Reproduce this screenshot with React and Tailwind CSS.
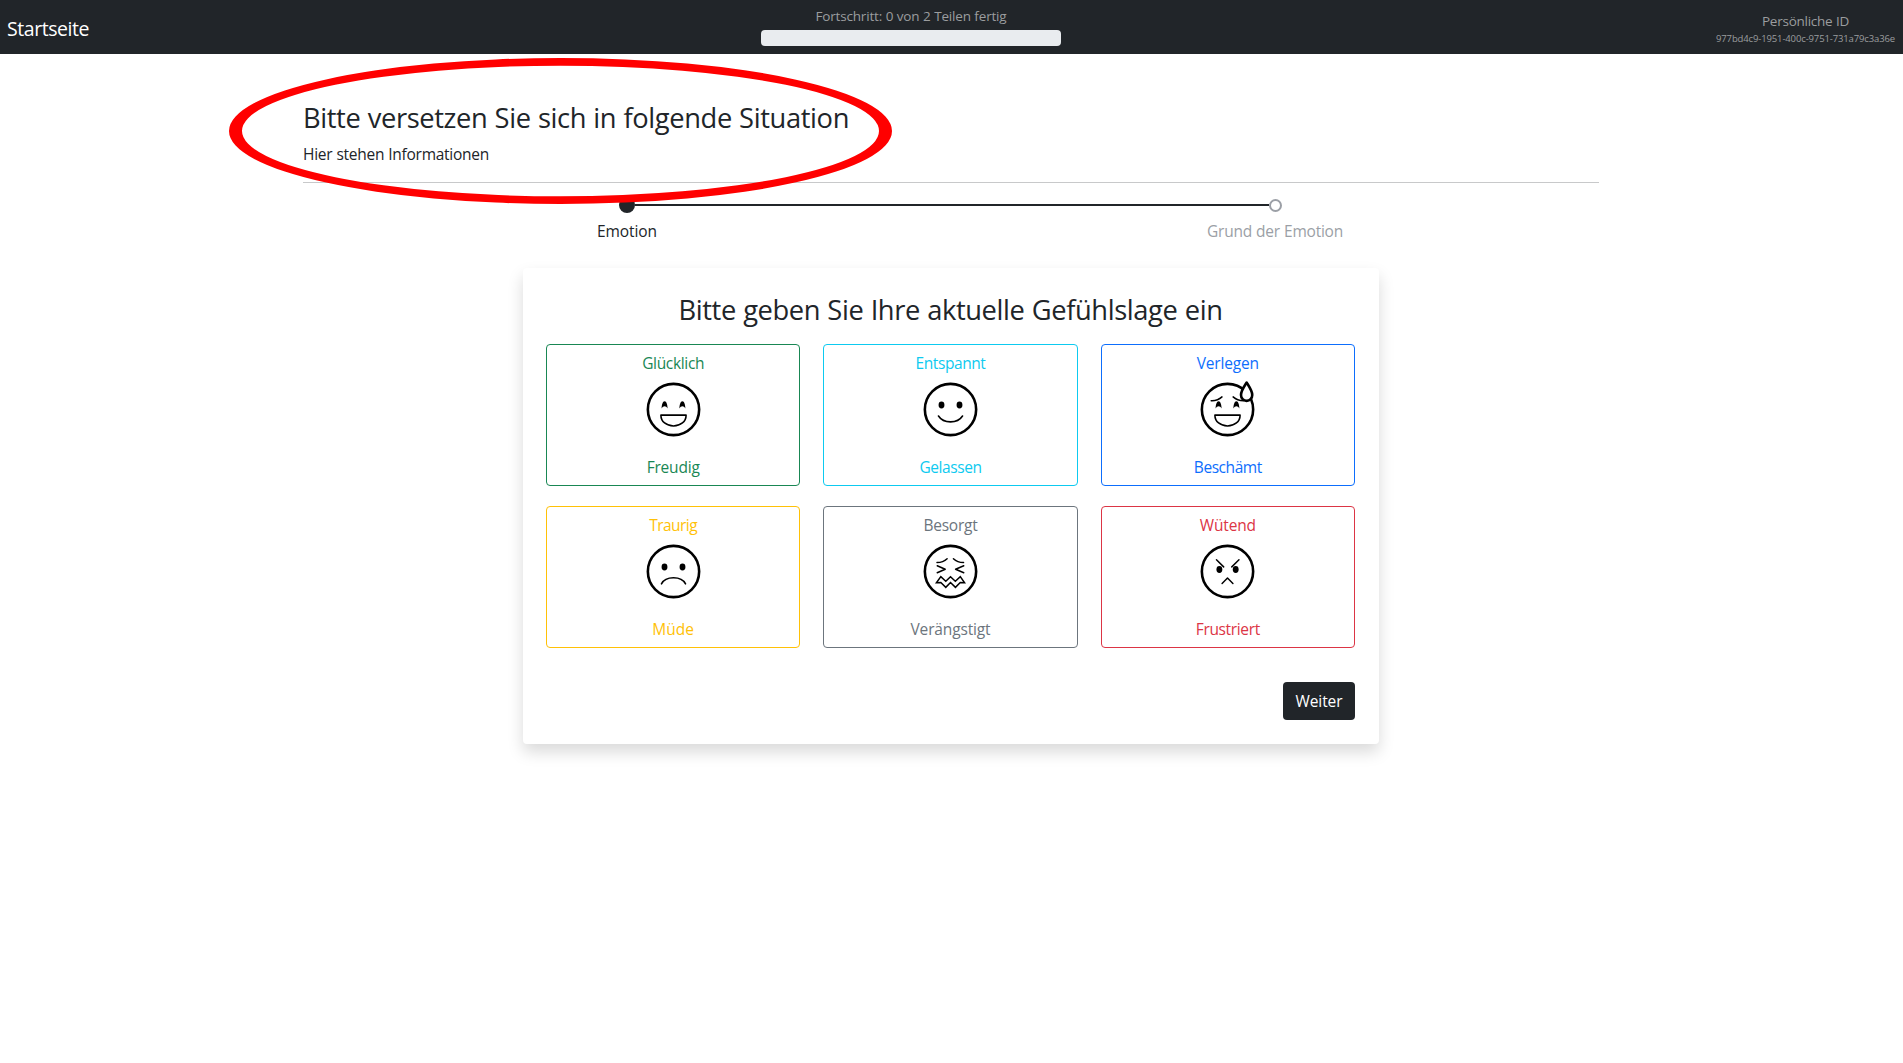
import React from "react";

// A text run tracked to an exact advance width.
function Run({ w, children, className = "" }) {
  const ref = React.useRef(null);
  const [ls, setLs] = React.useState(0);
  React.useLayoutEffect(() => {
    const n = ref.current.textContent.length;
    setLs((w - ref.current.getBoundingClientRect().width) / n);
  }, []);
  return (
    <span ref={ref} className={`inline-block whitespace-nowrap [word-spacing:0.02em] ${className}`} style={{ letterSpacing: `${ls}px` }}>
      {children}
    </span>
  );
}

const BigSmile = () => (
  <path strokeWidth="1.4" d="M24.800 41h22.400c0 5.800-5 9.600-11.200 9.600S24.800 46.800 24.800 41z" />
);

const HappyEyes = () => (
  <g fill="#000" stroke="none">
    <path d="M25.400 35.200c.2-3.600 1-6.600 2.700-6.600s2.500 3 2.700 6.600c-.8-1.600-1.700-2.200-2.700-2.200s-1.900.6-2.700 2.200z" />
    <path d="M41.200 35.200c.2-3.600 1-6.600 2.700-6.600s2.500 3 2.700 6.600c-.8-1.600-1.700-2.200-2.700-2.200s-1.900.6-2.700 2.200z" />
  </g>
);

const Eyes = ({ y = 31.9, a = 28, b = 44 }) => (
  <g fill="#000" stroke="none">
    <ellipse cx={a} cy={y} rx="2.600" ry="3.100" />
    <ellipse cx={b} cy={y} rx="2.600" ry="3.100" />
  </g>
);

const faces = {
  happy: (<><HappyEyes /><BigSmile /></>),
  calm: (<><Eyes /><path strokeWidth="1.400" d="M25.300 41.800c2.200 3.400 6.200 5.200 10.700 5.200s8.500-1.800 10.700-5.200" /></>),
  ashamed: (
    <>
      <HappyEyes />
      <BigSmile />
      <path strokeWidth="1.300" d="M21.500 28.200c3.800.2 7-1 9.600-3.400M41 24.800c2.600 2.400 5.600 3.400 9.200 3.400" />
      <path fill="#fff" d="M53 12c-2.500 4-5 7.500-5 11a5 5.300 0 0 0 10 0c0-3.500-2.500-7-5-11z" />
    </>
  ),
  sad: (<><Eyes /><path strokeWidth="1.400" d="M25.300 47c1.800-3.600 5.900-5.400 10.700-5.400s8.900 1.800 10.700 5.400" /></>),
  worried: (
    <g strokeWidth="1.300">
      <path d="M24 28c3.500 0 6.500-1 9-3.400M38.600 24.600c2.500 2.400 5.500 3.400 9 3.400" />
      <path d="M24.200 30.900l7.100 3.100-7.100 3.100M47.800 30.900L40.500 34l7.300 3.100" />
      <path strokeLinejoin="miter" d="M23.500 46l3.900-5.400 4.400 4L36 40.600l4.300 4 4.400-4L48.500 46l-3.800-.2-4.300 4.300L36 45.800l-4.200 4.300-4.400-4.300z" />
    </g>
  ),
  angry: (
    <>
      <Eyes y={34.200} a={28.800} b={43.300} />
      <path strokeWidth="1.300" d="M26.200 25.600l6.400 6.300M46.200 25.600l-6.400 6.300M31.200 46.700L36 41.800l4.800 4.900" />
    </>
  ),
};

const emotions = [
  ["Glücklich", 62, "Freudig", 53, "happy", "border-[#198754] text-[#198754]"],
  ["Entspannt", 70, "Gelassen", 62, "calm", "border-[#0dcaf0] text-[#0dcaf0]"],
  ["Verlegen", 62, "Beschämt", 68, "ashamed", "border-[#0d6efd] text-[#0d6efd]"],
  ["Traurig", 48, "Müde", 42, "sad", "border-[#ffc107] text-[#ffc107]"],
  ["Besorgt", 54, "Verängstigt", 80, "worried", "border-[#6c757d] text-[#6c757d]"],
  ["Wütend", 56, "Frustriert", 64, "angry", "border-[#dc3545] text-[#dc3545]"],
];

function EmotionCard({ data }) {
  const [top, tw, bottom, bw, face, color] = data;
  return (
    <button className={`flex h-[142px] flex-col items-center rounded border pt-[6px] leading-6 ${color}`}>
      <Run w={tw}>{top}</Run>
      <svg viewBox="0 0 72 72" className="-mt-[6px] h-[81px] w-[81px] shrink-0" fill="none" stroke="#000" strokeWidth="2.300" strokeLinecap="round" strokeLinejoin="round">
        <circle cx="36" cy="36" r="22.800" />
        {faces[face]}
      </svg>
      <Run w={bw} className="mt-[5px]">{bottom}</Run>
    </button>
  );
}

export default function App() {
  return (
    <div className="relative h-[1063px] overflow-hidden bg-white font-['Open_Sans','Noto_Sans',sans-serif] text-[15.500px] text-[#212529]">
      <header className="flex h-[54px] justify-between bg-[#212529] pr-2 text-[#9b9d9f]">
        <div className="w-[106px] pl-[7px] pt-[14px] text-[19.500px] leading-[30px] text-white"><Run w={82}>Startseite</Run></div>
        <div className="flex w-[300px] flex-col items-center pt-[6px] text-[13.500px] leading-[21px]">
          <Run w={191}>Fortschritt: 0 von 2 Teilen fertig</Run>
          <div className="mt-[3px] h-4 w-full rounded bg-[#e9ecef]" />
        </div>
        <div className="flex w-[179px] flex-col items-center pt-[11px] text-[13.500px] leading-[21px]">
          <Run w={87}>Persönliche ID</Run>
          <Run w={179} className="text-[9.500px] leading-[14px]">977bd4c9-1951-400c-9751-731a79c3a36e</Run>
        </div>
      </header>

      <main className="ml-[303px] w-[1296px] pt-[47px]">
        <h1 className="text-[27.300px] leading-[34px]"><Run w={546}>Bitte versetzen Sie sich in folgende Situation</Run></h1>
        <p className="mt-[7px] leading-6"><Run w={186}>Hier stehen Informationen</Run></p>
        <hr className="mt-[16px] border-[#c8c9ca]" />

        <div className="ml-[316px] mt-[14px] flex h-4 items-center">
          <div className="h-4 w-4 rounded-full bg-[#212529]" />
          <div className="h-[2px] w-[634px] bg-[#212529]" />
          <div className="h-[13px] w-[13px] rounded-full border-2 border-[#9b9fa6]" />
        </div>
        <div className="mt-[6px] grid grid-cols-2 text-center leading-6">
          <div><Run w={60}>Emotion</Run></div>
          <div className="text-[#9b9fa6]"><Run w={136}>Grund der Emotion</Run></div>
        </div>

        <section className="ml-[220px] mt-[25px] h-[476px] w-[856px] rounded pl-[23px] pr-[24px] pt-[25px] text-center shadow-[0_8px_16px_rgba(0,0,0,0.15)]">
          <h2 className="text-[27.300px] leading-[34px]"><Run w={544}>Bitte geben Sie Ihre aktuelle Gefühlslage ein</Run></h2>
          <div className="mt-[17px] grid grid-cols-3 gap-x-[23px] gap-y-5">
            {emotions.map((e) => <EmotionCard key={e[0]} data={e} />)}
          </div>
          <div className="mt-[34px] flex justify-end">
            <button className="flex h-[38px] w-[72px] items-center justify-center rounded bg-[#212529] pt-px text-white"><Run w={47}>Weiter</Run></button>
          </div>
        </section>
      </main>

      {/* Hand-drawn highlight around the situation text */}
      <svg className="pointer-events-none absolute left-[229px] top-[58px]" width="663" height="146" viewBox="0 0 663 146">
        <path fill="#f00" fillRule="evenodd" d="M0 73a331.500 73 0 1 0 663 0a331.500 73 0 1 0-663 0zM13 73a318.500 65.300 0 1 1 637 0a318.500 65.300 0 1 1-637 0z" />
      </svg>
    </div>
  );
}
